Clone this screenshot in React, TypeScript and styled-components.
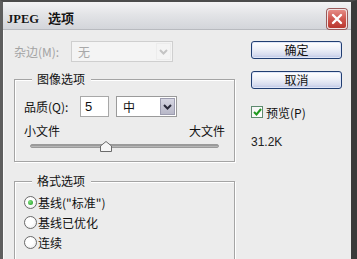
import React from "react";
import styled, { createGlobalStyle } from "styled-components";

const Global = createGlobalStyle`
  html, body { margin: 0; padding: 0; background: #ececec; }
  * { box-sizing: border-box; }
`;

const CJK = `"Noto Sans CJK SC", "Liberation Sans", sans-serif`;

const Window = styled.div`
  width: 357px;
  height: 259px;
  overflow: hidden;
  display: flex;
  flex-direction: column;
  border-left: 3px solid #5e5e5e;
  border-right: 6px solid #3a3a3a;
  border-top: 2px solid #4c4c4c;
  background: #ececec;
  font-family: ${CJK};
  font-size: 12px;
  color: #111;
`;

const TitleBar = styled.div`
  height: 28px;
  flex: none;
  display: flex;
  align-items: center;
  justify-content: space-between;
  padding: 0 4px 0 4px;
  background: linear-gradient(#f4f4f5 0%, #e3e4e7 45%, #d3d5da 100%);
  border-bottom: 1px solid #b8babf;
`;

const Title = styled.div`
  font-family: "Liberation Serif", "Noto Sans CJK SC", serif;
  font-weight: bold;
  font-size: 12.5px;
  color: #151515;
  display: flex;
  align-items: baseline;
  gap: 9px;
  margin-top: 3px;
  text-shadow: 0 0 1px rgba(255, 255, 255, 0.8);
`;

const TitleCJK = styled.span`
  font-family: ${CJK};
  font-weight: bold;
  font-size: 13px;
`;

const CloseButton = styled.div`
  width: 20px;
  height: 20px;
  margin-top: 6px;
  border-radius: 3px;
  border: 1px solid #f2e4e4;
  background: linear-gradient(#e58c86 0%, #cf574f 50%, #b9372f 100%);
  box-shadow: 0 0 0 1px #9a5a5a;
  display: flex;
  align-items: center;
  justify-content: center;
`;

const Body = styled.div`
  flex: 1;
  display: flex;
  padding-left: 10px;
  gap: 16px;
  border-left: 1px solid #fafafa;
`;

const LeftColumn = styled.div`
  width: 221px;
  display: flex;
  flex-direction: column;
  padding-top: 11px;
`;

const MatteRow = styled.div`
  display: flex;
  align-items: center;
  height: 21px;
`;

const Label = styled.span<{ $disabled?: boolean; $w?: number }>`
  color: ${(p) => (p.$disabled ? "#a3a3a3" : "#111")};
  width: ${(p) => (p.$w ? `${p.$w}px` : "auto")};
  flex: none;
  white-space: nowrap;
`;

const SelectBox = styled.div<{ $w: number; $disabled?: boolean }>`
  width: ${(p) => p.$w}px;
  height: 21px;
  display: flex;
  align-items: center;
  border: 1px solid ${(p) => (p.$disabled ? "#cfcfcf" : "#9a9a9a")};
  background: ${(p) => (p.$disabled ? "#f4f4f4" : "#fff")};
  color: ${(p) => (p.$disabled ? "#a8a8a8" : "#111")};
  padding-left: 6px;
  padding-right: 1px;
`;

const SelectText = styled.span`
  flex: 1;
`;

const ArrowButton = styled.div<{ $disabled?: boolean }>`
  width: 15px;
  height: 17px;
  display: flex;
  align-items: center;
  justify-content: center;
  background: ${(p) =>
    p.$disabled ? "#f4f4f4" : "linear-gradient(#d6d6e2, #b8b8c8)"};
  border: 1px solid ${(p) => (p.$disabled ? "#ececec" : "#9d9db0")};
`;

const Group = styled.div<{ $h: number; $mt: number }>`
  position: relative;
  height: ${(p) => p.$h}px;
  margin-top: ${(p) => p.$mt}px;
  border: 1px solid #a4a4a4;
  box-shadow: 1px 1px 0 #ffffff, inset 1px 1px 0 #ffffff;
  flex: none;
`;

const Legend = styled.span`
  position: absolute;
  top: -9px;
  left: 17px;
  padding: 0 6px 0 5px;
  background: #ececec;
  line-height: 16px;
  color: #111;
`;

const QualityRow = styled.div`
  display: flex;
  align-items: center;
  padding: 16px 0 0 9px;
  height: 37px;
`;

const NumberInput = styled.div`
  width: 29px;
  height: 21px;
  border: 1px solid #a8a8a8;
  background: #fff;
  margin-left: 6px;
  margin-right: 7px;
  padding-left: 4px;
  display: flex;
  align-items: center;
  font-family: "Liberation Sans", sans-serif;
  font-size: 13px;
`;

const SizeRow = styled.div`
  display: flex;
  justify-content: space-between;
  padding: 0 9px 0 9px;
  margin-top: 6px;
  line-height: 16px;
`;

const Slider = styled.div`
  position: relative;
  height: 14px;
  margin: 0 15px 0 15px;
  display: flex;
  align-items: center;
`;

const Track = styled.div`
  flex: 1;
  height: 4px;
  border-radius: 2px;
  background: linear-gradient(#8d8d8d, #c4c4c4);
  border: 1px solid #9a9a9a;
`;

const Thumb = styled.svg`
  position: absolute;
  top: 2px;
  margin-left: -6px;
`;

const RadioList = styled.div`
  display: flex;
  flex-direction: column;
  padding: 10px 0 0 9px;
`;

const RadioRow = styled.div`
  display: flex;
  align-items: center;
  height: 20px;
  gap: 1px;
`;

const RadioCircle = styled.span<{ $checked?: boolean }>`
  width: 13px;
  height: 13px;
  border-radius: 50%;
  border: 1px solid #6a6a6a;
  background: radial-gradient(circle at 40% 40%, #ffffff 40%, #e4e4e4 100%);
  display: flex;
  align-items: center;
  justify-content: center;
  &::after {
    content: "";
    display: ${(p) => (p.$checked ? "block" : "none")};
    width: 5px;
    height: 5px;
    border-radius: 50%;
    background: radial-gradient(circle at 35% 35%, #7ee07e, #1f9a1f);
  }
`;

const RightColumn = styled.div`
  width: 91px;
  display: flex;
  flex-direction: column;
  padding-top: 11px;
`;

const Button = styled.div<{ $mt?: number }>`
  height: 18px;
  margin-top: ${(p) => p.$mt ?? 0}px;
  border: 1px solid #213e72;
  border-radius: 3px;
  background: linear-gradient(#ffffff 0%, #eef0f8 45%, #d7dcef 80%, #bcc5e4 100%);
  box-shadow: inset 0 0 0 1px #dfe6f8;
  display: flex;
  align-items: center;
  justify-content: center;
  line-height: 14px;
  color: #111;
`;

const CheckRow = styled.div`
  display: flex;
  align-items: center;
  gap: 3px;
  margin-top: 16px;
  height: 14px;
`;

const CheckBox = styled.span`
  width: 12px;
  height: 12px;
  border: 1px solid #5d8a6e;
  background: linear-gradient(135deg, #f4f4f4, #ffffff);
  display: flex;
  align-items: center;
  justify-content: center;
`;

const SizeInfo = styled.div`
  margin-top: 16px;
  font-family: "Liberation Sans", sans-serif;
  font-size: 12px;
  color: #222;
`;

const Chevron = ({ color }: { color: string }) => (
  <svg width="9" height="6" viewBox="0 0 9 6">
    <path d="M1 1 L4.5 4.5 L8 1" stroke={color} strokeWidth="2" fill="none" />
  </svg>
);

export default function App() {
  const thumbPos = 0.4;
  return (
    <>
      <Global />
      <Window>
        <TitleBar>
          <Title>
            <span>JPEG</span>
            <TitleCJK>选项</TitleCJK>
          </Title>
          <CloseButton>
            <svg width="12" height="12" viewBox="0 0 12 12">
              <path d="M2 2 L10 10 M10 2 L2 10" stroke="#fff" strokeWidth="2.4" strokeLinecap="round" />
            </svg>
          </CloseButton>
        </TitleBar>
        <Body>
          <LeftColumn>
            <MatteRow>
              <Label $disabled $w={57}>杂边(M):</Label>
              <SelectBox $w={102} $disabled>
                <SelectText>无</SelectText>
                <ArrowButton $disabled>
                  <Chevron color="#c4c4c4" />
                </ArrowButton>
              </SelectBox>
            </MatteRow>
            <Group $h={83} $mt={17}>
              <Legend>图像选项</Legend>
              <QualityRow>
                <Label $w={50}>品质(Q):</Label>
                <NumberInput>5</NumberInput>
                <SelectBox $w={61}>
                  <SelectText>中</SelectText>
                  <ArrowButton>
                    <Chevron color="#2a2a3a" />
                  </ArrowButton>
                </SelectBox>
              </QualityRow>
              <SizeRow>
                <span>小文件</span>
                <span>大文件</span>
              </SizeRow>
              <Slider>
                <Track />
                <Thumb
                  width="12"
                  height="11"
                  viewBox="0 0 12 11"
                  style={{ left: `${thumbPos * 100}%` }}
                >
                  <path d="M6 0.5 L11.5 5 L11.5 10.5 L0.5 10.5 L0.5 5 Z" fill="#f6f6f6" stroke="#6b6b6b" />
                </Thumb>
              </Slider>
            </Group>
            <Group $h={120} $mt={19}>
              <Legend>格式选项</Legend>
              <RadioList>
                <RadioRow>
                  <RadioCircle $checked />
                  <span>基线("标准")</span>
                </RadioRow>
                <RadioRow>
                  <RadioCircle />
                  <span>基线已优化</span>
                </RadioRow>
                <RadioRow>
                  <RadioCircle />
                  <span>连续</span>
                </RadioRow>
              </RadioList>
            </Group>
          </LeftColumn>
          <RightColumn>
            <Button>确定</Button>
            <Button $mt={12}>取消</Button>
            <CheckRow>
              <CheckBox>
                <svg width="9" height="8" viewBox="0 0 9 8">
                  <path d="M1 4 L3.5 6.5 L8 1" stroke="#1f9a1f" strokeWidth="2" fill="none" />
                </svg>
              </CheckBox>
              <span>预览(P)</span>
            </CheckRow>
            <SizeInfo>31.2K</SizeInfo>
          </RightColumn>
        </Body>
      </Window>
    </>
  );
}
